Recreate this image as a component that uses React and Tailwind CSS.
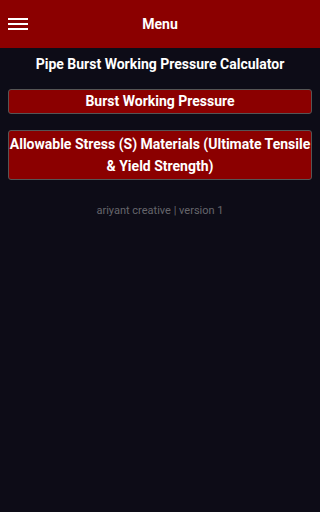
import React from 'react';

const App = () => {
  return (
    <div className="min-h-screen bg-[#0d0c17] font-['Roboto',sans-serif] text-white">
      <header className="flex h-12 items-center bg-[#8b0000] px-2">
        <button className="flex w-5 flex-col gap-[3px]" aria-label="menu">
          <span className="h-[2px] w-5 bg-white" />
          <span className="h-[2px] w-5 bg-white" />
          <span className="h-[2px] w-5 bg-white" />
        </button>
        <h1 className="flex-1 pr-5 text-center text-[14px] font-bold">Menu</h1>
      </header>

      <main className="px-2">
        <h2 className="py-[6px] text-center text-[14px] font-bold leading-5">
          Pipe Burst Working Pressure Calculator
        </h2>

        <button className="mt-[9px] flex h-[25px] w-full items-center justify-center rounded-[3px] border border-[#555] bg-[#8b0000] text-[14px] font-bold">
          Burst Working Pressure
        </button>

        <button className="mt-[16px] flex w-full flex-col items-center rounded-[3px] border border-[#555] bg-[#8b0000] py-[2px] text-center text-[14px] font-bold leading-[22px]">
          <span className="whitespace-nowrap">Allowable Stress (S) Materials (Ultimate Tensile</span>
          <span>&amp; Yield Strength)</span>
        </button>

        <p className="mt-[23px] text-center text-[11px] text-[#66666c]">
          ariyant creative | version 1
        </p>
      </main>
    </div>
  );
};

export default App;
